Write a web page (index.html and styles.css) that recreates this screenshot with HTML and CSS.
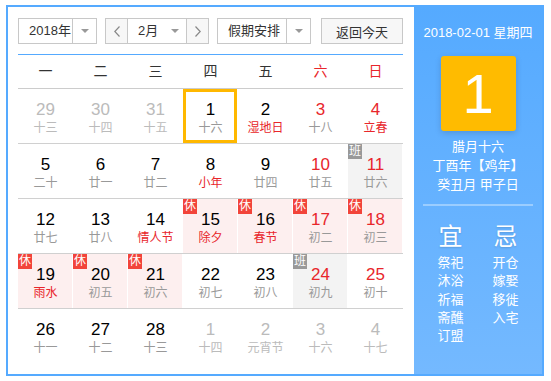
FILE: index.html
```html
<!DOCTYPE html>
<html>
<head>
    <meta charset="UTF-8">
    <title>万年历</title>
    <link rel="stylesheet" href="styles.css">
</head>
<body>
    <div class="calendar">
        <div class="main">
            <div class="toolbar">
                <div class="select year">
                    <span class="sel-text">2018年</span>
                    <span class="sel-arrow"><i class="caret"></i></span>
                </div>
                <div class="select month">
                    <span class="nav prev"><svg width="6" height="11" viewBox="0 0 6 11"><polyline points="5.5,0.5 0.8,5.5 5.5,10.5" fill="none" stroke="#888" stroke-width="1.2"/></svg></span>
                    <span class="sel-text">2月</span>
                    <span class="month-arrow"><i class="caret"></i></span>
                    <span class="nav next"><svg width="6" height="11" viewBox="0 0 6 11"><polyline points="0.5,0.5 5.2,5.5 0.5,10.5" fill="none" stroke="#888" stroke-width="1.2"/></svg></span>
                </div>
                <div class="select holiday">
                    <span class="sel-text">假期安排</span>
                    <span class="sel-arrow"><i class="caret"></i></span>
                </div>
                <button class="today-btn">返回今天</button>
            </div>

            <div class="weekdays">
                <span>一</span><span>二</span><span>三</span><span>四</span><span>五</span>
                <span class="red">六</span><span class="red">日</span>
            </div>

            <div class="week">
                <div class="cell other"><b>29</b><em>十三</em></div>
                <div class="cell other"><b>30</b><em>十四</em></div>
                <div class="cell other"><b>31</b><em>十五</em></div>
                <div class="cell today"><b>1</b><em>十六</em></div>
                <div class="cell"><b>2</b><em class="fest">湿地日</em></div>
                <div class="cell weekend"><b>3</b><em>十八</em></div>
                <div class="cell weekend"><b>4</b><em class="fest">立春</em></div>
            </div>
            <div class="week">
                <div class="cell"><b>5</b><em>二十</em></div>
                <div class="cell"><b>6</b><em>廿一</em></div>
                <div class="cell"><b>7</b><em>廿二</em></div>
                <div class="cell"><b>8</b><em class="fest">小年</em></div>
                <div class="cell"><b>9</b><em>廿四</em></div>
                <div class="cell weekend"><b>10</b><em>廿五</em></div>
                <div class="cell weekend work"><span class="tag">班</span><b>11</b><em>廿六</em></div>
            </div>
            <div class="week">
                <div class="cell"><b>12</b><em>廿七</em></div>
                <div class="cell"><b>13</b><em>廿八</em></div>
                <div class="cell"><b>14</b><em class="fest">情人节</em></div>
                <div class="cell rest"><span class="tag">休</span><b>15</b><em class="fest">除夕</em></div>
                <div class="cell rest"><span class="tag">休</span><b>16</b><em class="fest">春节</em></div>
                <div class="cell rest weekend"><span class="tag">休</span><b>17</b><em>初二</em></div>
                <div class="cell rest weekend"><span class="tag">休</span><b>18</b><em>初三</em></div>
            </div>
            <div class="week">
                <div class="cell rest"><span class="tag">休</span><b>19</b><em class="fest">雨水</em></div>
                <div class="cell rest"><span class="tag">休</span><b>20</b><em>初五</em></div>
                <div class="cell rest"><span class="tag">休</span><b>21</b><em>初六</em></div>
                <div class="cell"><b>22</b><em>初七</em></div>
                <div class="cell"><b>23</b><em>初八</em></div>
                <div class="cell weekend work"><span class="tag">班</span><b>24</b><em>初九</em></div>
                <div class="cell weekend"><b>25</b><em>初十</em></div>
            </div>
            <div class="week last">
                <div class="cell"><b>26</b><em>十一</em></div>
                <div class="cell"><b>27</b><em>十二</em></div>
                <div class="cell"><b>28</b><em>十三</em></div>
                <div class="cell other"><b>1</b><em>十四</em></div>
                <div class="cell other"><b>2</b><em>元宵节</em></div>
                <div class="cell other"><b>3</b><em>十六</em></div>
                <div class="cell other"><b>4</b><em>十七</em></div>
            </div>
        </div>

        <div class="side">
            <div class="side-date">2018-02-01 星期四</div>
            <div class="big-day">1</div>
            <div class="lunar-info">
                <div>腊月十六</div>
                <div>丁酉年【鸡年】</div>
                <div>癸丑月 甲子日</div>
            </div>
            <div class="sep"></div>
            <div class="yiji">
                <div class="col">
                    <div class="yj-title">宜</div>
                    <div>祭祀</div><div>沐浴</div><div>祈福</div><div>斋醮</div><div>订盟</div>
                </div>
                <div class="col">
                    <div class="yj-title">忌</div>
                    <div>开仓</div><div>嫁娶</div><div>移徙</div><div>入宅</div>
                </div>
            </div>
        </div>
    </div>
</body>
</html>
```

FILE: styles.css
```css
body {
    margin: 5px 0 0 6px;
    background: #fff;
    font-family: "Liberation Sans", "Noto Sans CJK SC", sans-serif;
    color: #333;
}
.calendar {
    display: flex;
    width: 534px;
    height: 367px;
    border: 2px solid #55aaff;
}
.main { width: 385px; padding: 11px 11px 0 10px; }

/* toolbar */
.toolbar { display: flex; height: 26px; margin-bottom: 10px; }
.select {
    display: flex; box-sizing: border-box; height: 26px;
    border: 1px solid #c8c8c8; font-size: 13px; line-height: 24px; color: #333;
}
.year { width: 79px; margin-right: 8px; }
.month { width: 104px; margin-right: 8px; }
.holiday { width: 94px; margin-right: 10px; }
.sel-text { flex: 1; padding-left: 10px; }
.sel-arrow {
    width: 23px; border-left: 1px solid #c8c8c8;
    display: flex; align-items: center; justify-content: center;
}
.month-arrow { width: 22px; display: flex; align-items: center; justify-content: center; }
.caret {
    width: 0; height: 0;
    border-left: 4px solid transparent; border-right: 4px solid transparent;
    border-top: 4px solid #999;
}
.nav {
    width: 21px; background: #f7f7f7;
    display: flex; align-items: center; justify-content: center;
}
.prev { border-right: 1px solid #c8c8c8; }
.next { border-left: 1px solid #c8c8c8; }
.today-btn {
    width: 82px; height: 26px; padding: 0;
    background: #f7f7f7; border: 1px solid #c8c8c8;
    font-family: inherit; font-size: 13px; color: #333;
}

/* grid */
.weekdays {
    display: grid; grid-template-columns: repeat(7, 55px);
    height: 33px; line-height: 33px; text-align: center;
    border-top: 1px solid #55aaff; border-bottom: 1px solid #ccc;
    font-size: 14px; color: #333;
}
.weekdays .red { color: #e8262b; }
.week {
    display: grid; grid-template-columns: repeat(7, 55px);
    height: 54px; border-bottom: 1px solid #d0d0d0;
}
.week.last { border-bottom: none; }
.cell {
    position: relative; text-align: center;
    padding-top: 12px; box-sizing: border-box;
}
.cell b { display: block; font-weight: normal; font-size: 17px; line-height: 18px; color: #000; }
.cell em { display: block; font-style: normal; font-size: 12px; line-height: 18px; color: #999; }
.cell em.fest { color: #e8262b; }
.cell.weekend b { color: #e8262b; }
.cell.other b { color: #bbb; }
.cell.other em { color: #bbb; }
.cell.rest { background: #fdefef; box-shadow: inset -1px 0 #fff; }
.cell.work { background: #f3f3f3; box-shadow: inset -1px 0 #fff; }
.cell.today::after {
    content: ""; position: absolute; left: 0; top: 0;
    width: 54px; height: 54px; box-sizing: border-box;
    border: 3px solid #ffb800;
}
.tag {
    position: absolute; left: 0; top: 0;
    width: 14px; height: 15px; line-height: 15px;
    font-size: 12px; color: #fff; background: #f2443a;
}
.work .tag { background: #999; }

/* side panel */
.side {
    flex: 1; padding-top: 16px;
    background: linear-gradient(#55aaff, #74b9ff);
    color: #fff; text-align: center;
}
.side-date { font-size: 13px; line-height: 20px; }
.big-day {
    width: 75px; height: 75px; margin: 13px auto 0;
    background: #ffbb00; border-radius: 3px;
    box-shadow: 0 2px 6px rgba(0,0,0,0.15);
    font-size: 56px; line-height: 75px;
}
.lunar-info { margin-top: 6px; font-size: 13px; line-height: 19px; }
.sep { width: 110px; height: 2px; margin: 10px auto 0; background: rgba(255,255,255,0.35); }
.yiji { display: flex; justify-content: center; gap: 15px; margin-top: 16px; font-size: 13px; line-height: 18.3px; }
.yiji .col { width: 40px; }
.yj-title { font-size: 24px; line-height: 30px; margin-bottom: 2px; text-shadow: 0 1px 2px rgba(0,0,0,0.15); }
```
